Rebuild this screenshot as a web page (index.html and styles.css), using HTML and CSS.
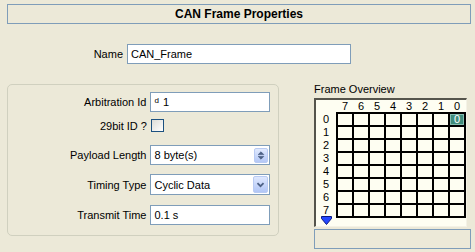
FILE: index.html
```html
<!DOCTYPE html>
<html>
<head>
<meta charset="utf-8">
<link rel="stylesheet" href="styles.css">
</head>
<body>
<div class="page">
  <div class="title">CAN Frame Properties</div>

  <div class="name-row">
    <span class="name-label">Name</span>
    <div class="field name-field"><span class="val">CAN_Frame</span></div>
  </div>

  <div class="main">
    <div class="group">
      <div class="row r1">
        <span class="label">Arbitration Id</span>
        <div class="field"><span class="val"><span class="radix">d</span>1</span></div>
      </div>
      <div class="row r2">
        <span class="label">29bit ID ?</span>
        <div class="check"></div>
      </div>
      <div class="row r3">
        <span class="label">Payload Length</span>
        <div class="field"><span class="val">8 byte(s)</span>
          <div class="spin">
            <svg width="13" height="13" viewBox="0 0 13 13"><path d="M3.5 5.5l3-3 3 3z M3.5 7.5l3 3 3-3z" fill="#4d6185" stroke="#4d6185" stroke-width="0.8" stroke-linejoin="round"/></svg>
          </div>
        </div>
      </div>
      <div class="row r4">
        <span class="label">Timing Type</span>
        <div class="field combo"><span class="val">Cyclic Data</span>
          <div class="drop">
            <svg width="15" height="17" viewBox="0 0 15 17"><path d="M4 7l3.5 3.5L11 7" fill="none" stroke="#4d6185" stroke-width="2"/></svg>
          </div>
        </div>
      </div>
      <div class="row r5">
        <span class="label">Transmit Time</span>
        <div class="field"><span class="val">0.1 s</span></div>
      </div>
    </div>

    <div class="overview">
      <div class="ov-title">Frame Overview</div>
      <div class="ov-box">
        <div class="ov-side">
          <div class="ov-corner"></div>
          <div class="rl">0</div><div class="rl">1</div><div class="rl">2</div><div class="rl">3</div>
          <div class="rl">4</div><div class="rl">5</div><div class="rl">6</div><div class="rl">7</div>
          <svg class="arrow" width="11" height="9" viewBox="0 0 11 9"><path d="M0.5 0.5h10v2l-5 6-5-6z" fill="#2448ff" stroke="#0a1a80" stroke-width="1"/></svg>
        </div>
        <div class="ov-main">
          <div class="cols">
            <span>7</span><span>6</span><span>5</span><span>4</span><span>3</span><span>2</span><span>1</span><span>0</span>
          </div>
          <div class="cells">
            <div></div><div></div><div></div><div></div><div></div><div></div><div></div><div class="on">0</div>
            <div></div><div></div><div></div><div></div><div></div><div></div><div></div><div></div>
            <div></div><div></div><div></div><div></div><div></div><div></div><div></div><div></div>
            <div></div><div></div><div></div><div></div><div></div><div></div><div></div><div></div>
            <div></div><div></div><div></div><div></div><div></div><div></div><div></div><div></div>
            <div></div><div></div><div></div><div></div><div></div><div></div><div></div><div></div>
            <div></div><div></div><div></div><div></div><div></div><div></div><div></div><div></div>
            <div></div><div></div><div></div><div></div><div></div><div></div><div></div><div></div>
          </div>
        </div>
      </div>
      <div class="status"></div>
    </div>
  </div>
</div>
</body>
</html>
```

FILE: styles.css
```css
html, body {
  margin: 0;
  padding: 0;
  background: #ece9d8;
}
body {
  width: 475px;
  height: 252px;
  overflow: hidden;
  font-family: "Liberation Sans", Arial, sans-serif;
  font-size: 11px;
  color: #000;
}
.page {
  padding-top: 4px;
}
.title {
  margin: 0 4px 0 7px;
  height: 20px;
  box-sizing: border-box;
  border: 1px solid #7f9db9;
  font-weight: bold;
  font-size: 12px;
  line-height: 18px;
  text-align: center;
}
.name-row {
  display: flex;
  align-items: center;
  gap: 4px;
  margin-top: 20px;
}
.name-label {
  width: 123px;
  text-align: right;
}
.field {
  height: 20px;
  box-sizing: border-box;
  border: 1px solid #7f9db9;
  background: #fff;
  display: flex;
  align-items: center;
  padding-left: 3px;
}
.field .val {
  flex: 1;
  white-space: nowrap;
}
.name-field {
  width: 224px;
}
.main {
  display: flex;
  align-items: flex-start;
  margin-top: 20px;
}
.group {
  margin-left: 7px;
  width: 272px;
  height: 152px;
  box-sizing: border-box;
  border: 1px solid #d0d0bf;
  border-radius: 5px;
  padding: 7px 8px 0 0;
  display: flex;
  flex-direction: column;
}
.row {
  display: flex;
  align-items: center;
  gap: 4px;
}
.row .label {
  width: 139px;
  text-align: right;
  white-space: nowrap;
}
.row .field {
  width: 120px;
}
.r2 { margin-top: 7px; }
.r3 { margin-top: 13px; }
.r4 { margin-top: 9px; }
.r5 { margin-top: 10px; }
.r4 .field { height: 21px; }
.radix {
  font-size: 8px;
  position: relative;
  top: -3px;
  margin-right: 4px;
}
.check {
  width: 13px;
  height: 13px;
  box-sizing: border-box;
  border: 1px solid #1c5180;
  background: linear-gradient(135deg, #dcdcd7, #fff);
}
.spin {
  width: 14px;
  height: 15px;
  margin-right: 1px;
  box-sizing: border-box;
  border: 1px solid #b9cbf3;
  border-radius: 2px;
  background: linear-gradient(#e1eafe, #b4c8f6);
  display: flex;
  align-items: center;
  justify-content: center;
}
.spin svg { display: block; }
.drop {
  width: 15px;
  height: 17px;
  margin-right: 1px;
  box-sizing: border-box;
  border: 1px solid #b9cbf3;
  border-radius: 2px;
  background: linear-gradient(#dfe8fe, #b1c6f6);
  display: flex;
  align-items: center;
  justify-content: center;
}
.drop svg { display: block; }
.overview {
  margin-left: 35px;
  width: 157px;
  margin-top: -1px;
}
.ov-title {
  line-height: 13px;
  height: 13px;
  margin-bottom: 2px;
}
.ov-box {
  width: 153px;
  box-sizing: border-box;
  display: flex;
  background: #fefef2;
  border-top: 2px solid #55544c;
  border-left: 2px solid #55544c;
  border-right: 1px solid #f4f2e6;
  border-bottom: 1px solid #f4f2e6;
}
.ov-side {
  width: 20px;
  display: flex;
  flex-direction: column;
  align-items: center;
}
.ov-corner {
  height: 12px;
}
.rl {
  height: 13px;
  line-height: 13px;
  padding-top: 1px;
  box-sizing: border-box;
  text-align: center;
}
.arrow {
  display: block;
  margin-top: 0;
  margin-bottom: 1px;
}
.cols {
  display: grid;
  grid-template-columns: repeat(8, 14px);
  column-gap: 2px;
  padding: 0 2px;
  height: 12px;
  line-height: 12px;
}
.cols span {
  text-align: center;
}
.cells {
  display: grid;
  grid-template-columns: repeat(8, 14px);
  grid-auto-rows: 11px;
  gap: 2px;
  padding: 2px;
  background: #000;
  width: 130px;
  box-sizing: border-box;
}
.cells div {
  background: #fefef2;
}
.cells .on {
  background: #3f8c7b;
  box-shadow: inset 0 0 0 1px #86bdb0;
  color: #fff;
  text-align: center;
  line-height: 11px;
  font-size: 11px;
}
.status {
  margin-top: 2px;
  height: 20px;
  box-sizing: border-box;
  border: 1px solid #7f9db9;
  width: 157px;
}
```
